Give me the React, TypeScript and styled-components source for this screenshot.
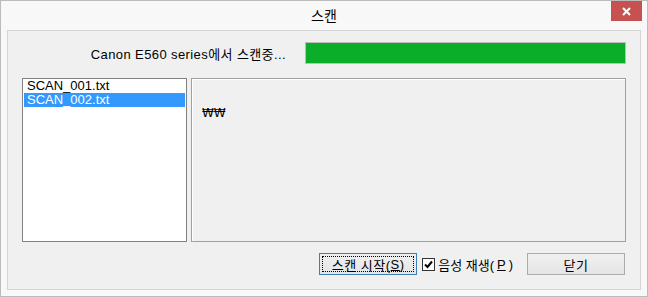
import React from 'react';
import styled, { createGlobalStyle } from 'styled-components';

const font = `'Liberation Sans', 'Noto Sans CJK KR', sans-serif`;

const GlobalStyle = createGlobalStyle`
    html, body {
        margin: 0;
        padding: 0;
        background: #ffffff;
    }
    * {
        box-sizing: border-box;
    }
`;

const Window = styled.div`
    width: 648px;
    height: 297px;
    border: 1px solid #bcbcbc;
    background: #f8f8f8;
    padding: 0 6px 6px 6px;
    display: flex;
    flex-direction: column;
    font-family: ${font};
    font-size: 13px;
    color: #000;
`;

const TitleBar = styled.div`
    height: 29px;
    display: grid;
    grid-template-columns: 1fr auto 1fr;
    align-items: start;
`;

const Title = styled.div`
    grid-column: 2;
    padding-top: 4px;
    font-family: 'Noto Sans CJK KR', sans-serif;
    font-size: 14px;
    line-height: 20px;
`;

const Close = styled.div`
    grid-column: 3;
    justify-self: end;
    width: 31px;
    height: 20px;
    margin-right: -1px;
    background: #c75050;
    display: flex;
    align-items: center;
    justify-content: center;
`;

const Client = styled.div`
    flex: 1;
    border: 1px solid #d5d5d5;
    background: #f0f0f0;
    display: flex;
    flex-direction: column;
    padding: 11px 14px 14px 14px;
`;

const StatusRow = styled.div`
    display: flex;
    align-items: center;
    justify-content: flex-end;
    height: 22px;
    gap: 19px;
`;

const Status = styled.span`
    letter-spacing: 0.4px;
`;

const Progress = styled.div`
    width: 321px;
    height: 22px;
    border: 1px solid #bcbcbc;
    background: #0aae28;
`;

const Body = styled.div`
    display: flex;
    gap: 4px;
    height: 164px;
    margin-top: 14px;
`;

const ListBox = styled.div`
    width: 165px;
    border: 1px solid #828282;
    background: #ffffff;
    padding: 0 1px;
`;

const ListItem = styled.div<{ selected?: boolean }>`
    height: 14px;
    line-height: 14px;
    padding-left: 3px;
    background: ${(p) => (p.selected ? '#3399ff' : 'transparent')};
    color: ${(p) => (p.selected ? '#ffffff' : '#000000')};
`;

const TextPanel = styled.div`
    flex: 1;
    border: 1px solid #a0a0a0;
    box-shadow: inset 1px 1px 0 #ffffff;
    padding: 27px 0 0 10px;
    line-height: 14px;
    font-family: 'DejaVu Sans', sans-serif;
    font-size: 12px;
`;

const Footer = styled.div`
    display: flex;
    align-items: center;
    justify-content: flex-end;
    margin-top: 11px;
    height: 22px;
    padding-right: 1px;
`;

const Button = styled.div<{ focused?: boolean }>`
    width: 98px;
    height: 22px;
    border: 1px solid ${(p) => (p.focused ? '#3c7fb1' : '#acacac')};
    background: linear-gradient(#f0f0f0, #e5e5e5);
    display: flex;
    align-items: center;
    justify-content: center;
    padding: 2px;
    letter-spacing: 0.5px;
`;

const Focus = styled.div`
    width: 100%;
    height: 100%;
    border: 1px dotted #000;
    display: flex;
    align-items: center;
    justify-content: center;
`;

const Check = styled.label`
    display: flex;
    align-items: center;
    gap: 3px;
    margin: 0 14px 0 5px;
`;

const Key = styled.span`
    text-decoration: underline;
`;

const CheckBox = () => (
    <svg width="13" height="13" viewBox="0 0 13 13">
        <rect x="0.5" y="0.5" width="12" height="12" fill="#fff" stroke="#333" />
        <path d="M3 6.5 L5.5 9 L10 3.5" fill="none" stroke="#000" strokeWidth="2" />
    </svg>
);

export default function App() {
    return (
        <>
            <GlobalStyle />
            <Window>
                <TitleBar>
                    <Title>스캔</Title>
                    <Close>
                        <svg width="9" height="9" viewBox="0 0 9 9">
                            <path d="M1 1 L8 8 M8 1 L1 8" stroke="#fff" strokeWidth="2" />
                        </svg>
                    </Close>
                </TitleBar>
                <Client>
                    <StatusRow>
                        <Status>Canon E560 series에서 스캔중...</Status>
                        <Progress />
                    </StatusRow>
                    <Body>
                        <ListBox>
                            <ListItem>SCAN_001.txt</ListItem>
                            <ListItem selected>SCAN_002.txt</ListItem>
                        </ListBox>
                        <TextPanel>₩₩</TextPanel>
                    </Body>
                    <Footer>
                        <Button focused>
                            <Focus>
                                스캔 시작(<Key>S</Key>)
                            </Focus>
                        </Button>
                        <Check>
                            <CheckBox />
                            음성 재생(<Key>P</Key>)
                        </Check>
                        <Button>닫기</Button>
                    </Footer>
                </Client>
            </Window>
        </>
    );
}
